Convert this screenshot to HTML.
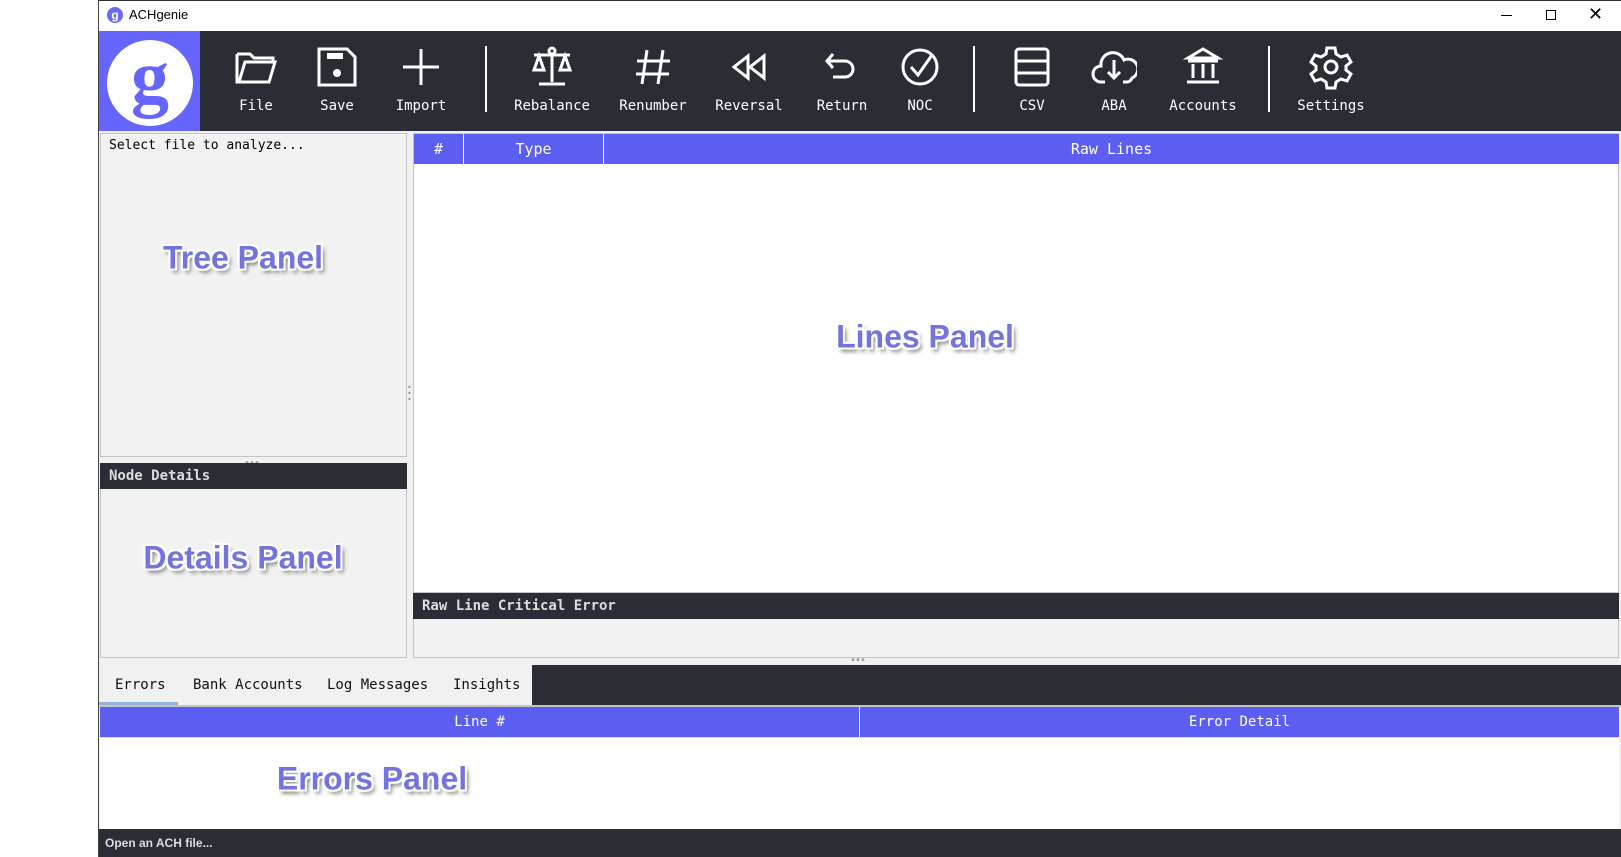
<!DOCTYPE html>
<html><head><meta charset="utf-8"><style>
*{margin:0;padding:0;box-sizing:border-box}
body{width:1621px;height:857px;background:#fff;position:relative;overflow:hidden;font-family:"DejaVu Sans Mono","Liberation Mono",monospace}
.a{position:absolute}
.tb{color:#fff;font-size:14px;text-align:center;width:120px;margin-left:-60px;top:98px}
.ic{top:44px;width:46px;height:46px;margin-left:-23px}
.sep{top:46px;width:2px;height:66px;background:#fff}
.hdr{background:#5c5ef2;color:#fff;font-size:15px;display:flex;align-items:center;justify-content:center}
.dh{background:#2a2d34;color:#ddd;font-weight:bold;font-size:14px;padding-left:9px;display:flex;align-items:center}
.big{font-family:"Liberation Sans",sans-serif;font-weight:bold;font-size:32px;color:#7474de;-webkit-text-stroke:0;text-shadow:-2px -2px 0 #fff,2px -2px 0 #fff,-2px 2px 0 #fff,2px 2px 0 #fff,0 -2px 0 #fff,0 2px 0 #fff,-2px 0 0 #fff,2px 0 0 #fff,3px 4px 4px #777;white-space:nowrap;transform:translate(-50%,-50%)}
svg{stroke:#fff;fill:none;stroke-width:3}
</style></head><body>
<!-- window -->
<div class="a" style="left:98px;top:0;width:1523px;height:857px;border-left:1px solid #444;border-top:1px solid #333;background:#f1f1f1"></div>
<!-- titlebar -->
<div class="a" style="left:99px;top:1px;width:1522px;height:30px;background:#fff"></div>
<div class="a" style="left:107px;top:7px;width:16px;height:16px;border-radius:50%;background:#6a6af5;color:#fff;font:bold 12px 'Liberation Sans';text-align:center;line-height:16px">g</div>
<div class="a" style="left:129px;top:7px;font:13px 'Liberation Sans',sans-serif;color:#000">ACHgenie</div>
<div class="a" style="left:1501px;top:15px;width:11px;height:1px;background:#000"></div>
<div class="a" style="left:1546px;top:10px;width:10px;height:10px;border:1px solid #000"></div>
<div class="a" style="left:1588px;top:4px;font:18px 'Liberation Sans';color:#000">✕</div>
<!-- toolbar -->
<div class="a" style="left:99px;top:31px;width:1522px;height:100px;background:#2a2d34"></div>
<div class="a" style="left:99px;top:31px;width:101px;height:100px;background:#6666ff"></div>
<div class="a" style="left:107px;top:40px;width:86px;height:86px;border-radius:50%;background:#fff;color:#6666ff;font:bold 76px 'Liberation Serif',serif;text-align:center;line-height:74px">g</div>
<!-- icons -->
<svg class="a ic" style="left:256px" viewBox="0 0 46 46"><path d="M4 10h13l4 4h19v4M4 10v28h32l6-20H12L6 38"/></svg>
<svg class="a ic" style="left:337px" viewBox="0 0 46 46"><path d="M5 5h28l8 8v28H5z"/><rect x="13" y="9" width="16" height="6" fill="#fff" stroke="none"/><circle cx="23" cy="29" r="4" fill="#fff" stroke="none"/></svg>
<svg class="a ic" style="left:421px" viewBox="0 0 46 46"><path d="M23 5v36M5 23h36"/></svg>
<div class="a sep" style="left:485px"></div>
<svg class="a ic" style="left:552px" viewBox="0 0 46 46"><circle cx="23" cy="7" r="3"/><path d="M5 11h36M23 10v28M10 40h26M10 12l-5 14h10zM36 12l-5 14h10z"/></svg>
<svg class="a ic" style="left:653px" viewBox="0 0 46 46"><path d="M17 6l-5 34M33 6l-5 34M7 17h33M6 30h33"/></svg>
<svg class="a ic" style="left:749px" viewBox="0 0 46 46"><path d="M22 12L8 23l14 11zM38 12L24 23l14 11z"/></svg>
<svg class="a ic" style="left:842px" viewBox="0 0 46 46"><path d="M14 10l-6 7 6 7M8 17h18a8 8 0 010 16H14"/></svg>
<svg class="a ic" style="left:920px" viewBox="0 0 46 46"><circle cx="23" cy="23" r="17"/><path d="M14 23l7 8 14-20"/></svg>
<div class="a sep" style="left:973px"></div>
<svg class="a ic" style="left:1032px" viewBox="0 0 46 46"><rect x="7" y="5" width="32" height="36" rx="3"/><path d="M7 17h32M7 29h32"/></svg>
<svg class="a ic" style="left:1114px" viewBox="0 0 46 46"><path d="M14 38H10a8 8 0 010-16 12 12 0 0123-6 9 9 0 018 18 6 6 0 01-5 4H32"/><path d="M23 16v18M17 28l6 6 6-6"/></svg>
<svg class="a ic" style="left:1203px" viewBox="0 0 46 46"><path d="M23 5L8 14h30zM8 17h30M13 20v14M23 20v14M33 20v14M7 38h32"/></svg>
<div class="a sep" style="left:1268px"></div>
<svg class="a ic" style="left:1331px" viewBox="0 0 46 46"><path d="M19 4h8l1 6 5 3 6-2 4 7-5 4v4l5 4-4 7-6-2-5 3-1 6h-8l-1-6-5-3-6 2-4-7 5-4v-4l-5-4 4-7 6 2 5-3z"/><circle cx="23" cy="23" r="6"/></svg>
<div class="a tb" style="left:256px">File</div>
<div class="a tb" style="left:337px">Save</div>
<div class="a tb" style="left:421px">Import</div>
<div class="a tb" style="left:552px">Rebalance</div>
<div class="a tb" style="left:653px">Renumber</div>
<div class="a tb" style="left:749px">Reversal</div>
<div class="a tb" style="left:842px">Return</div>
<div class="a tb" style="left:920px">NOC</div>
<div class="a tb" style="left:1032px">CSV</div>
<div class="a tb" style="left:1114px">ABA</div>
<div class="a tb" style="left:1203px">Accounts</div>
<div class="a tb" style="left:1331px">Settings</div>
<!-- tree panel -->
<div class="a" style="left:100px;top:133px;width:307px;height:324px;border:1px solid #c4c4c4;background:#f2f2f2"></div>
<div class="a" style="left:109px;top:138px;font-size:13px;color:#000">Select file to analyze...</div>
<div class="a" style="left:244px;top:458px;color:#999;font-size:10px;letter-spacing:-1px">•••</div>
<div class="a dh" style="left:100px;top:463px;width:307px;height:26px">Node Details</div>
<div class="a" style="left:100px;top:489px;width:307px;height:169px;border:1px solid #c4c4c4;border-top:none;background:#f2f2f2"></div>
<!-- lines panel -->
<div class="a" style="left:413px;top:133px;width:1206px;height:460px;border:1px solid #c4c4c4;background:#fff"></div>
<div class="a hdr" style="left:414px;top:134px;width:49px;height:30px">#</div>
<div class="a hdr" style="left:464px;top:134px;width:139px;height:30px">Type</div>
<div class="a hdr" style="left:604px;top:134px;width:1015px;height:30px">Raw Lines</div>
<div class="a dh" style="left:413px;top:593px;width:1206px;height:26px">Raw Line Critical Error</div>
<div class="a" style="left:413px;top:619px;width:1206px;height:39px;border:1px solid #c4c4c4;border-top:none;background:#f2f2f2"></div>
<div class="a" style="left:407px;top:385px;color:#999;font-size:8px;line-height:6px;width:6px">•<br>•<br>•</div>
<div class="a" style="left:850px;top:655px;color:#999;font-size:10px;letter-spacing:-1px">•••</div>
<!-- tabs -->
<div class="a" style="left:532px;top:665px;width:1089px;height:40px;background:#2a2d34"></div>
<div class="a" style="left:115px;top:677px;font-size:14px;color:#111">Errors</div>
<div class="a" style="left:193px;top:677px;font-size:14px;color:#111">Bank Accounts</div>
<div class="a" style="left:327px;top:677px;font-size:14px;color:#111">Log Messages</div>
<div class="a" style="left:453px;top:677px;font-size:14px;color:#111">Insights</div>
<div class="a" style="left:99px;top:702px;width:79px;height:3px;background:#8fb3d9"></div>
<div class="a" style="left:99px;top:705px;width:1522px;height:2px;background:#c4c4c4"></div>
<div class="a hdr" style="left:100px;top:707px;width:759px;height:30px;font-size:14px">Line #</div>
<div class="a hdr" style="left:860px;top:707px;width:759px;height:30px;font-size:14px">Error Detail</div>
<div class="a" style="left:100px;top:737px;width:1519px;height:92px;background:#fff;border-top:1px solid #ddd"></div>
<!-- status -->
<div class="a" style="left:99px;top:829px;width:1522px;height:28px;background:#2a2d34"></div>
<div class="a" style="left:105px;top:836px;font:bold 12px 'Liberation Sans',sans-serif;color:#ddd">Open an ACH file...</div>
<!-- labels -->
<div class="a big" style="left:243px;top:258px">Tree Panel</div>
<div class="a big" style="left:925px;top:337px">Lines Panel</div>
<div class="a big" style="left:243px;top:558px">Details Panel</div>
<div class="a big" style="left:372px;top:779px">Errors Panel</div>
</body></html>
